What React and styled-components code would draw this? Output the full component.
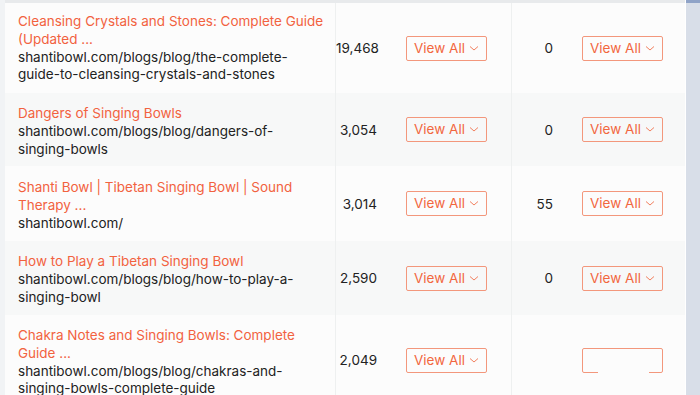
import React from "react";
import styled, { createGlobalStyle } from "styled-components";

const GlobalStyle = createGlobalStyle`
    body {
        margin: 0;
        background: #ffffff;
        font-family: Inter, "Open Sans", sans-serif;
    }
`

const Page = styled.div`
    display: flex;
    height: 395px;
    overflow: hidden;
`

const Gutter = styled.div`
    width: 5px;
    background: #f1f3f5;
`

const Table = styled.div`
    width: 680px;
    display: flex;
    flex-direction: column;
    border-top: 3px solid #e8eaec;
`

const Sidebar = styled.div`
    flex: 1;
    margin-left: 1px;
    background: #d8dee8;
    border-top: 3px solid #8fa3c7;
`

const Row = styled.div`
    display: grid;
    grid-template-columns: 330px 176px 174px;
    flex: 0 0 auto;
    height: ${props => props.h}px;
    background: ${props => props.shaded ? "#f7f8f8" : "#fcfcfc"};
`

const TitleCell = styled.div`
    padding: ${props => props.top}px 0 0 13px;
    font-size: 13.5px;
    line-height: 17.8px;
`

const Line = styled.span`
    display: block;
    white-space: nowrap;
    color: ${props => props.link ? "#f2623f" : "#222222"};
`

const MetricCell = styled.div`
    position: relative;
    display: flex;
    align-items: center;
    border-left: 1px solid #eef0f0;
`

const Value = styled.span`
    width: 41px;
    margin-right: 1px;
    text-align: right;
    font-size: 13.5px;
    color: #222222;
`

const Button = styled.button`
    display: flex;
    align-items: center;
    justify-content: center;
    gap: 4px;
    margin-left: 28px;
    width: 81px;
    height: 25px;
    padding: 0 0 1px;
    border: 1px solid #f3977c;
    border-radius: 2px;
    background: transparent;
    font-family: inherit;
    font-size: 13.5px;
    color: #f2673f;
`

const Hidden = styled.span`
    visibility: hidden;
`

// white smudge covering the last value in the screenshot
const Smudge = styled.div`
    position: absolute;
    left: 86px;
    top: 50%;
    width: 51px;
    height: 8px;
    margin-top: 8px;
    background: #fcfcfc;
`

const Chevron = () => (
    <svg width="10" height="8" viewBox="0 0 10 8">
        <path d="M1 2.5 L5 6 L9 2.5" fill="none" stroke="#f2805f" strokeWidth="1" />
    </svg>
)

const rows = [
    {
        h: 90,
        top: 10,
        title: ["Cleansing Crystals and Stones: Complete Guide", "(Updated ..."],
        url: ["shantibowl.com/blogs/blog/the-complete-", "guide-to-cleansing-crystals-and-stones"],
        traffic: "19,468",
        keywords: "0"
    },
    {
        h: 73,
        top: 12,
        title: ["Dangers of Singing Bowls"],
        url: ["shantibowl.com/blogs/blog/dangers-of-", "singing-bowls"],
        traffic: "3,054",
        keywords: "0"
    },
    {
        h: 75,
        top: 13,
        title: ["Shanti Bowl | Tibetan Singing Bowl | Sound", "Therapy ..."],
        url: ["shantibowl.com/"],
        traffic: "3,014",
        keywords: "55"
    },
    {
        h: 74,
        top: 12,
        title: ["How to Play a Tibetan Singing Bowl"],
        url: ["shantibowl.com/blogs/blog/how-to-play-a-", "singing-bowl"],
        traffic: "2,590",
        keywords: "0"
    },
    {
        h: 90,
        top: 12,
        title: ["Chakra Notes and Singing Bowls: Complete", "Guide ..."],
        url: ["shantibowl.com/blogs/blog/chakras-and-", "singing-bowls-complete-guide"],
        traffic: "2,049",
        keywords: null
    }
]

const App = () => {
    return (
        <Page>
            <GlobalStyle />
            <Gutter />
            <Table>
                {rows.map((row, i) => (
                    <Row key={i} h={row.h} shaded={i % 2 === 1}>
                        <TitleCell top={row.top}>
                            {row.title.map(t => <Line key={t} link>{t}</Line>)}
                            {row.url.map(u => <Line key={u}>{u}</Line>)}
                        </TitleCell>
                        <MetricCell>
                            <Value>{row.traffic}</Value>
                            <Button>View All <Chevron /></Button>
                        </MetricCell>
                        <MetricCell>
                            <Value>{row.keywords}</Value>
                            {row.keywords === null ? (
                                <>
                                    <Button><Hidden>View All</Hidden></Button>
                                    <Smudge />
                                </>
                            ) : (
                                <Button>View All <Chevron /></Button>
                            )}
                        </MetricCell>
                    </Row>
                ))}
            </Table>
            <Sidebar />
        </Page>
    )
}

export default App;
